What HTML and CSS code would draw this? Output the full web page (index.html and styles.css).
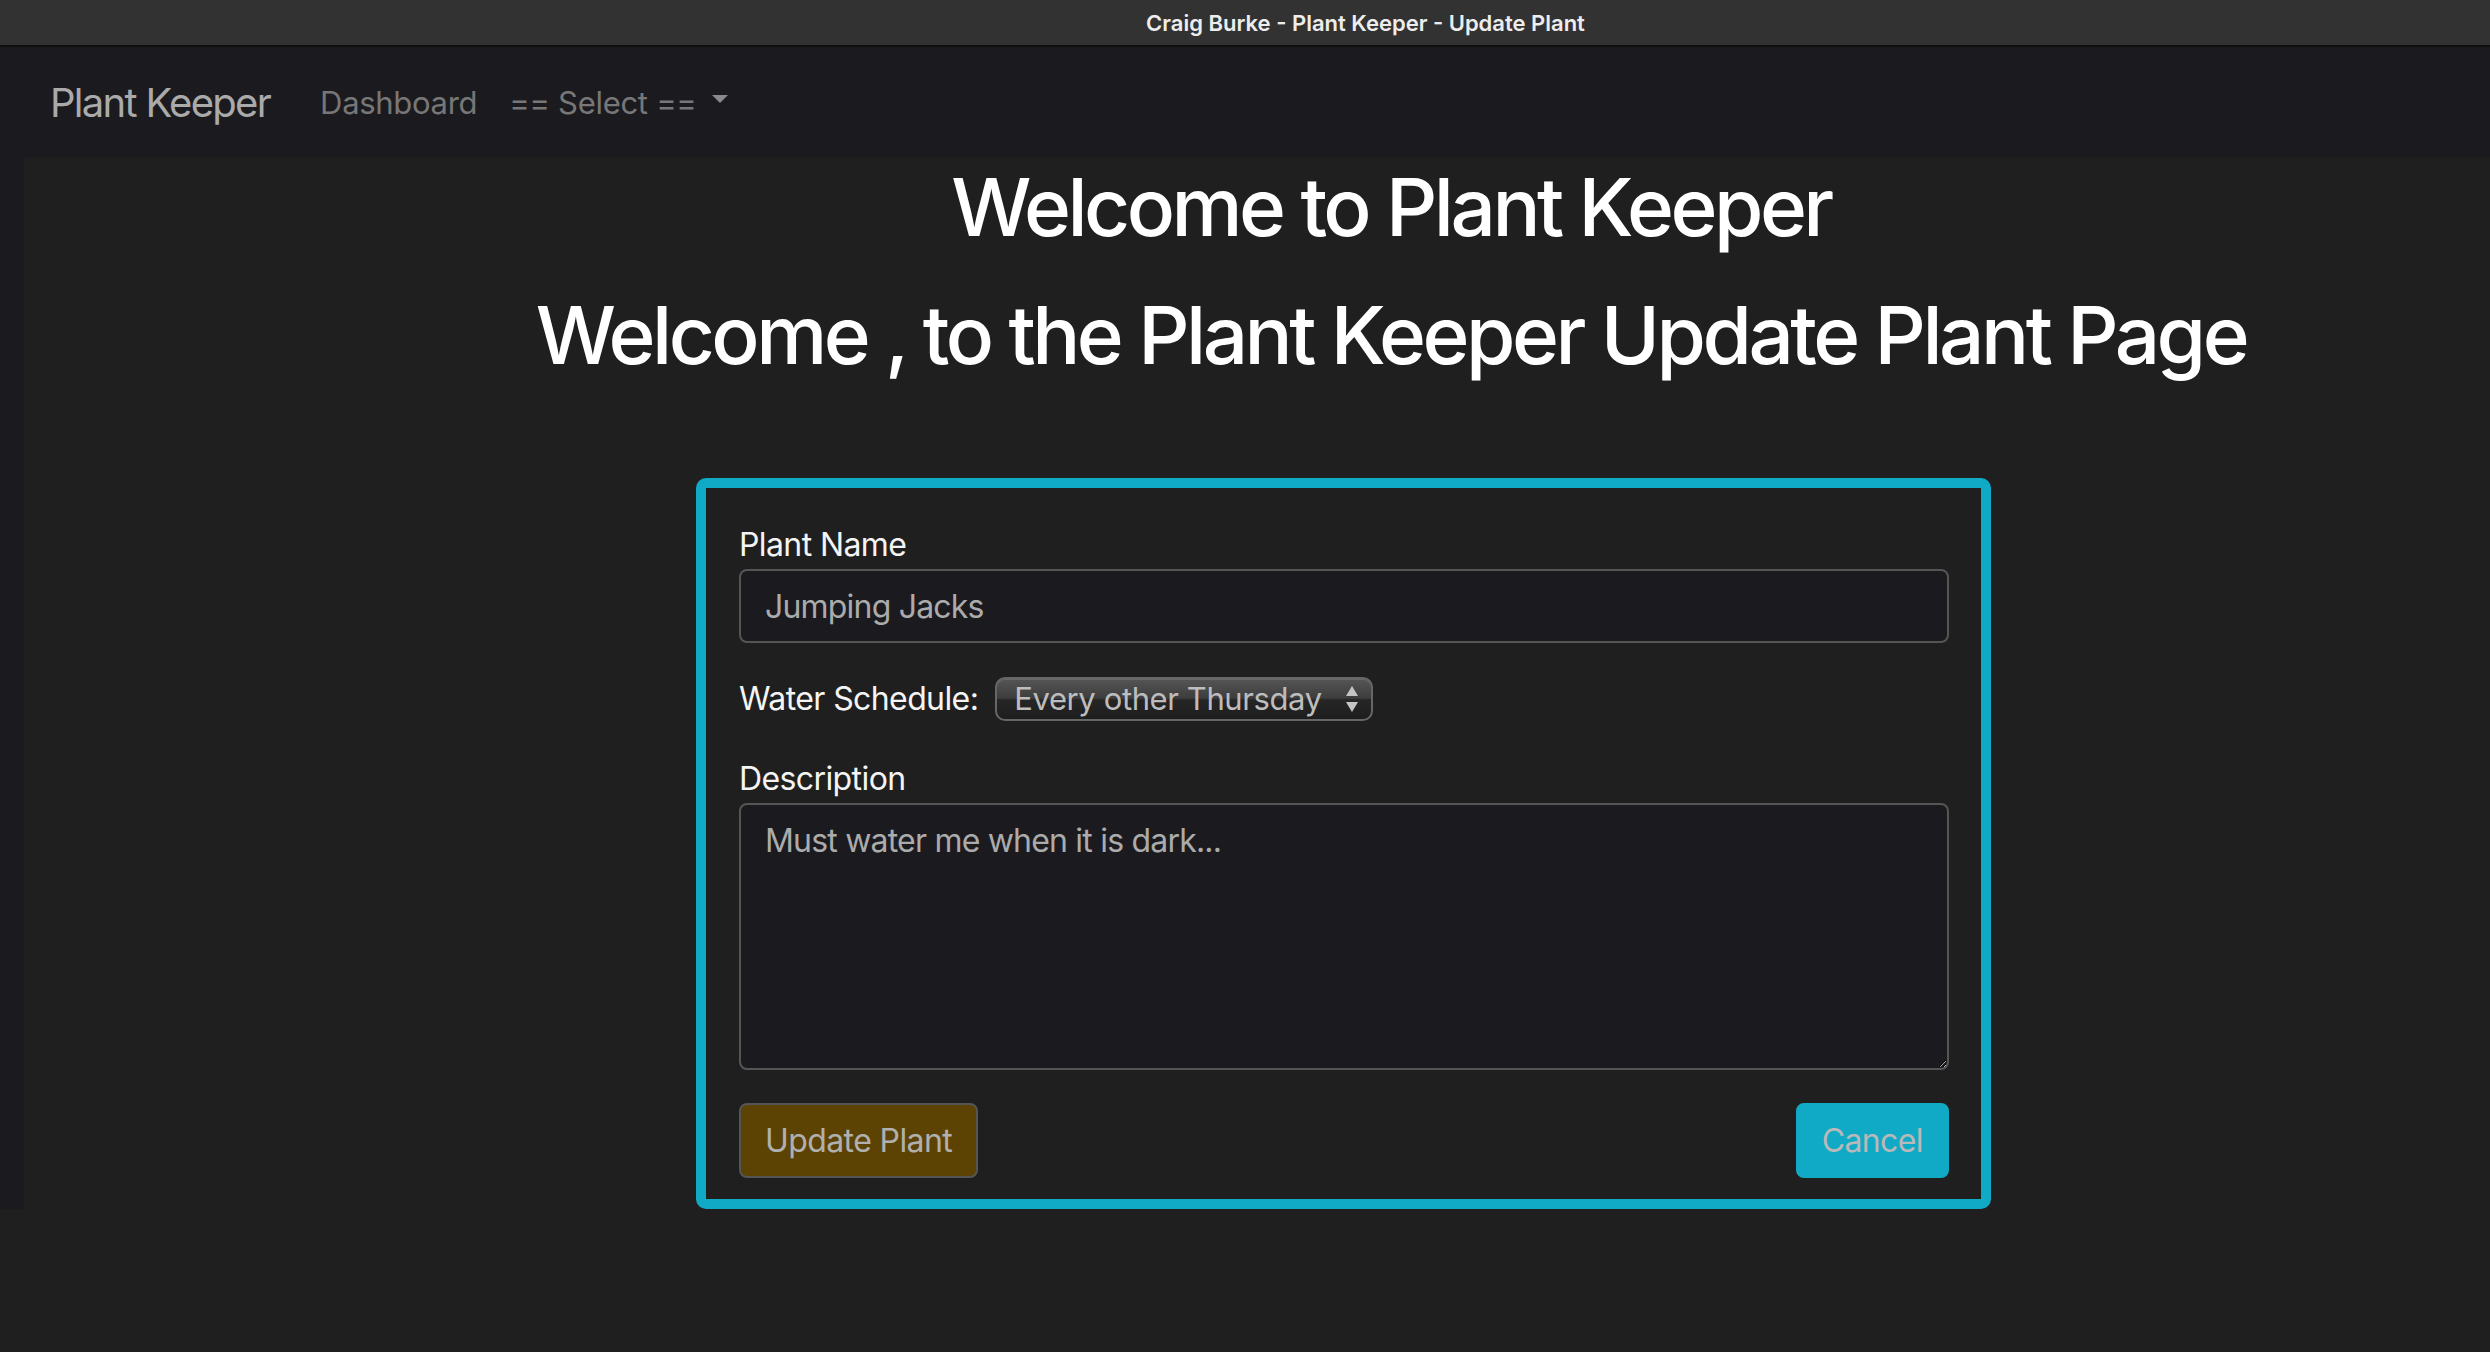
FILE: index.html
```html
<!DOCTYPE html>
<html lang="en">
<head>
<meta charset="utf-8">
<title>Craig Burke - Plant Keeper - Update Plant</title>
<link rel="stylesheet" href="styles.css">
</head>
<body>
<div class="titlebar"><span class="titlebar-text">Craig Burke - Plant Keeper - Update Plant</span></div>
<nav class="navbar">
  <a class="brand">Plant Keeper</a>
  <a class="nav-link">Dashboard</a>
  <a class="nav-link">== Select == <span class="caret"></span></a>
</nav>
<div class="page">
  <div class="strip"></div>
  <main class="content">
    <h1 class="heading">Welcome to Plant Keeper</h1>
    <h1 class="heading heading-sub">Welcome , to the Plant Keeper Update Plant Page</h1>
    <form class="card">
      <label class="form-label">Plant Name</label>
      <input class="form-control" type="text" value="Jumping Jacks">
      <div class="schedule-row">
        <label class="form-label">Water Schedule:</label>
        <div class="select">
          <span class="select-text">Every other Thursday</span>
          <svg class="select-arrows" width="14" height="28" viewBox="0 0 14 28"><path d="M7 1 L13 11 L1 11 Z" fill="#c4c4c4"/><path d="M1 17 L13 17 L7 27 Z" fill="#c4c4c4"/></svg>
        </div>
      </div>
      <label class="form-label desc-label">Description</label>
      <textarea class="form-control textarea">Must water me when it is dark...</textarea>
      <div class="actions">
        <button class="btn btn-update" type="button">Update Plant</button>
        <button class="btn btn-cancel" type="button">Cancel</button>
      </div>
    </form>
  </main>
</div>
</body>
</html>
```

FILE: styles.css
```css
* { box-sizing: border-box; }
html, body { margin: 0; }
body {
  background: #1f1f1f;
  font-family: Inter, Roboto, "Liberation Sans", sans-serif;
  color: #fff;
  height: 1352px;
  overflow: hidden;
}
.titlebar {
  height: 47px;
  background: #323232;
  border-bottom: 2px solid #0f0f0f;
  display: flex;
  align-items: center;
  justify-content: center;
  padding-left: 241px;
}
.titlebar-text {
  font-size: 22px;
  font-weight: 600;
  color: #ededed;
}
.navbar {
  height: 110px;
  background: #1b1b1f;
  display: flex;
  align-items: center;
  padding-left: 50px;
}
.brand {
  font-size: 40px;
  color: #aaaaaa;
  margin-right: 50px;
  letter-spacing: -1.7px;
}
.nav-link {
  font-size: 31px;
  color: #777777;
  margin-right: 32px;
  display: flex;
  align-items: center;
  letter-spacing: -0.3px;
}
.caret {
  width: 0;
  height: 0;
  border-top: 8px solid #8a8a8a;
  border-left: 8px solid transparent;
  border-right: 8px solid transparent;
  margin-left: 15px;
  margin-bottom: 6px;
}
.page {
  display: flex;
  background: #1b1b1f;
}
.strip { width: 24px; flex: none; }
.content {
  flex: 1;
  background: #1f1f1f;
  padding-top: 2px;
}
.heading {
  font-size: 80px;
  font-weight: 500;
  line-height: 96px;
  margin: 0;
  text-align: center;
  padding-left: 268px;
  color: #ffffff;
  letter-spacing: -3.5px;
}
.heading-sub { margin-top: 32px; }
.card {
  width: 1295px;
  margin: 95px 0 0 672px;
  border: 10px solid #10aac6;
  border-radius: 10px;
  padding: 33px 32px 21px 33px;
  letter-spacing: -0.6px;
}
.form-label {
  display: block;
  font-size: 32px;
  line-height: 48px;
  color: #f4f4f4;
}
.form-control {
  display: block;
  width: 100%;
  height: 74px;
  background: #1b1b1f;
  border: 2px solid #555555;
  border-radius: 8px;
  color: #ababab;
  font-family: inherit;
  font-size: 32px;
  letter-spacing: -0.8px;
  padding: 0 24px;
  outline: none;
}
.schedule-row {
  display: flex;
  align-items: center;
  gap: 17px;
  margin-top: 32px;
}
.select {
  width: 378px;
  height: 44px;
  border: 2px solid #666666;
  border-radius: 10px;
  background: linear-gradient(#555555, #3d3d3d 48%, #262626 52%, #1d1d1d);
  box-shadow: inset 0 1px 0 rgba(255,255,255,0.12);
  display: flex;
  align-items: center;
  justify-content: space-between;
  padding: 0 12px 0 17px;
}
.select-text {
  font-size: 31px;
  color: #bdbdbd;
  line-height: 40px;
  letter-spacing: -0.4px;
}
.select-arrows { flex: none; }
.desc-label { margin-top: 32px; }
.textarea {
  height: 267px;
  padding: 12px 24px;
  line-height: 48px;
  resize: vertical;
}
.actions {
  display: flex;
  justify-content: space-between;
  margin-top: 33px;
}
.btn {
  height: 75px;
  padding: 0 24px;
  border-radius: 8px;
  font-family: inherit;
  font-size: 32px;
  letter-spacing: -0.6px;
  border: 2px solid #555555;
}
.btn-update {
  background: #5c4303;
  color: #b0b0b0;
}
.btn-cancel {
  background: #10aac6;
  border-color: #10aac6;
  color: #b9b9b9;
}
```
